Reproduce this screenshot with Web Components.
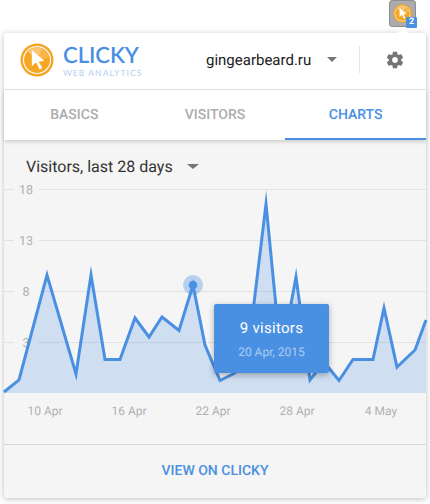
<!doctype html>
<html><head><meta charset="utf-8">
<style>
html,body{margin:0;padding:0;background:#fff;font-family:Roboto,"Liberation Sans",sans-serif;text-rendering:geometricPrecision}
</style></head><body>
<clicky-popup>
  <clicky-toolbar slot="toolbar" count="2"></clicky-toolbar>
  <clicky-header site="gingearbeard.ru"></clicky-header>
  <clicky-tabs active="2"><span>BASICS</span><span>VISITORS</span><span>CHARTS</span></clicky-tabs>
  <clicky-range>Visitors, last 28 days</clicky-range>
  <clicky-chart></clicky-chart>
  <clicky-footer>VIEW ON CLICKY</clicky-footer>
</clicky-popup>
<script>
const LOGO = (s) => `<svg width="${s}" height="${s}" viewBox="0 0 36 36" aria-hidden="true">
  <circle cx="18" cy="18" r="17.5" fill="#f5a623"/>
  <circle cx="18" cy="18" r="14.2" fill="none" stroke="#fff" stroke-width="1.3"/>
  <circle cx="18" cy="18" r="13.4" fill="#f5a623"/>
  <path d="M18 18 L7.5 8.5 A13.4 13.4 0 0 1 24 6 Z" fill="#fbc46e"/>
  <path d="M18 18 L24 6 A13.4 13.4 0 0 1 31 15 Z" fill="#f8b548"/>
  <path d="M12.5 7.5 L12.5 24.5 L17 20.5 L20.8 28 L23.6 26.5 L19.8 19.6 L26 19 Z" fill="#fff"/>
</svg>`;
class Base extends HTMLElement{
  constructor(){super();this.attachShadow({mode:'open'});}
}
customElements.define('clicky-popup',class extends Base{connectedCallback(){this.shadowRoot.innerHTML=`<style>
  :host{display:block;width:430px;height:504px;overflow:hidden;font-family:Roboto,"Liberation Sans",sans-serif}
  .card{margin:0 4px;width:422px;height:465px;background:#f5f5f5;border-radius:2px;box-shadow:0 1px 6px rgba(0,0,0,.26);display:flex;flex-direction:column;position:relative}
</style><slot name="toolbar"></slot><div class="card"><slot></slot></div>`;}});

customElements.define('clicky-toolbar',class extends Base{connectedCallback(){this.shadowRoot.innerHTML=`<style>
  :host{display:flex;justify-content:flex-end;height:33px;padding-right:14px;box-sizing:border-box;position:relative;z-index:2}
  .btn{width:27px;height:27px;box-sizing:border-box;background:#ababab;border:1px solid #8f8f8f;border-radius:3px;display:flex;align-items:center;justify-content:center;position:relative}
  .btn svg{display:block;margin:0 1px 1px 0}
  .badge{position:absolute;right:-2px;bottom:-2px;width:11px;height:11px;background:#4a90e2;color:#fff;font:700 9px/11px Roboto,sans-serif;text-align:center;border-radius:1px}
  .tip{position:absolute;top:27px;right:21px;width:0;height:0;border:6px solid transparent;border-top:0;border-bottom:6px solid #fff}
</style><div class="btn">${LOGO(19)}<span class="badge">${this.getAttribute('count')}</span></div><i class="tip"></i>`;}});

customElements.define('clicky-header',class extends Base{connectedCallback(){this.shadowRoot.innerHTML=`<style>
  :host{display:flex;align-items:center;height:57px;box-sizing:border-box;background:#fff;border-bottom:1px solid #e4e4e4;padding:0 0 3px 16px;border-radius:2px 2px 0 0}
  .logo{width:34px;height:34px;margin-right:9px;flex:none;margin-top:1px}
  .logo svg{display:block}
  .brand{display:flex;flex-direction:column;width:143px;margin-top:1px}
  .name{font:600 22.2px/24px Lato,sans-serif;color:#4a90e2;letter-spacing:-.1px}
  .sub{font:400 8.5px/10px Lato,sans-serif;color:#b4cff0;letter-spacing:1.05px;margin-top:1px}
  .site{font-size:15px;color:#212121;letter-spacing:0;width:121px}
  .caret{width:0;height:0;border:5.5px solid transparent;border-top:5.5px solid #757575;border-bottom:0;flex:none}
  .sep{width:1px;height:27px;background:#e4e4e4;margin-left:22px}
  .gear{margin-left:25px;display:block}
</style><div class="logo">${LOGO(34)}</div><div class="brand"><div class="name">CLICKY</div><div class="sub">WEB ANALYTICS</div></div>
<div class="site">${this.getAttribute('site')}</div><i class="caret"></i><i class="sep"></i>
<svg class="gear" width="20" height="20" viewBox="0 0 24 24"><path fill="#757575" d="M19.43 12.98c.04-.32.07-.64.07-.98s-.03-.66-.07-.98l2.11-1.65c.19-.15.24-.42.12-.64l-2-3.46c-.12-.22-.39-.3-.61-.22l-2.49 1c-.52-.4-1.08-.73-1.69-.98l-.38-2.65C14.46 2.18 14.25 2 14 2h-4c-.25 0-.46.18-.49.42l-.38 2.65c-.61.25-1.17.59-1.69.98l-2.49-1c-.23-.09-.49 0-.61.22l-2 3.46c-.13.22-.07.49.12.64l2.11 1.65c-.04.32-.07.65-.07.98s.03.66.07.98l-2.11 1.65c-.19.15-.24.42-.12.64l2 3.46c.12.22.39.3.61.22l2.49-1c.52.4 1.08.73 1.69.98l.38 2.65c.03.24.24.42.49.42h4c.25 0 .46-.18.49-.42l.38-2.65c.61-.25 1.17-.59 1.69-.98l2.49 1c.23.09.49 0 .61-.22l2-3.46c.12-.22.07-.49-.12-.64l-2.11-1.65zM12 15.5c-1.93 0-3.5-1.57-3.5-3.5s1.57-3.5 3.5-3.5 3.5 1.57 3.5 3.5-1.57 3.5-3.5 3.5z"/></svg>`;}});

customElements.define('clicky-tabs',class extends Base{connectedCallback(){
  const labels=[...this.querySelectorAll('span')].map(s=>s.textContent);
  const active=+this.getAttribute('active');
  this.shadowRoot.innerHTML=`<style>
  :host{display:grid;grid-template-columns:repeat(3,1fr);height:50px;background:#fff;box-shadow:0 2px 4px rgba(0,0,0,.16);position:relative;z-index:1}
  .t{display:flex;align-items:center;justify-content:center;font-weight:500;font-size:14px;color:#adadad;box-sizing:border-box;padding-top:1px;padding-bottom:1px}
  .on{color:#4a90e2;border-bottom:2px solid #4a90e2;padding-bottom:0;padding-top:2px}
</style>${labels.map((l,i)=>`<div class="t${i===active?' on':''}">${l}</div>`).join('')}`;}});

customElements.define('clicky-range',class extends Base{connectedCallback(){this.shadowRoot.innerHTML=`<style>
  :host{display:flex;align-items:center;height:49px;padding:3px 0 0 22px;box-sizing:border-box;color:#333;font-size:16px;}
  i{margin-left:14px;width:0;height:0;border:6px solid transparent;border-top:5px solid #757575;border-bottom:0}
</style><slot></slot><i></i>`;}});

customElements.define('clicky-chart',class extends Base{connectedCallback(){
  const pts=[[0,392],[15,380],[43,275],[72,374],[87,275],[101,359.5],[116,359.5],[131,318],[145,337],[158,317],[175,330.5],[189,285],[201,345],[216,380.5],[231,373],[248,320],[262,204],[277,358],[292,277],[306,380],[320,362],[335,380.5],[349,359.5],[369,359.5],[380,308],[393,367],[411,350],[422,320]];
  const P=pts.map(([x,y])=>`${x},${y-189}`).join(' ');
  const grid=[[0,'18'],[51,'13'],[102,'8'],[153,'3']];
  const xl=[[41,'10 Apr'],[125,'16 Apr'],[209,'22 Apr'],[293,'28 Apr'],[377,'4 May']];
  this.shadowRoot.innerHTML=`<style>
  :host{display:block;height:255px;position:relative}
  svg{display:block;position:absolute;left:0;top:0;overflow:visible}
  text{font-family:Roboto,sans-serif;fill:#b0b0b0}
  .tip{position:absolute;left:210px;top:115px;width:115px;height:69px;background:#4a90e2;border-radius:2px;box-shadow:0 2px 6px rgba(0,0,0,.3);color:#fff;display:flex;flex-direction:column;align-items:center;box-sizing:border-box;padding-top:15px}
  .a{font-size:15px;line-height:18px;letter-spacing:.3px}
  .b{font-size:12px;line-height:14px;margin-top:8px;color:rgba(255,255,255,.55)}
</style>
<svg width="422" height="255" viewBox="0 0 422 255">
  ${grid.map(([y,t])=>`<path d="M0 ${y+.5}H10M35 ${y+.5}H422" stroke="#e2e2e2" stroke-width="1" fill="none"/><text x="22" y="${y+4.5}" text-anchor="middle" font-size="12.5">${t}</text>`).join('')}
  <polygon points="0,204 ${P} 422,204" fill="#4a90e2" fill-opacity=".22"/>
  <polyline points="${P}" fill="none" stroke="#4a90e2" stroke-width="3" stroke-linejoin="miter" stroke-miterlimit="10"/>
  <circle cx="189" cy="96" r="10" fill="#4a90e2" fill-opacity=".36"/>
  <circle cx="189" cy="96" r="4.3" fill="#4a90e2"/>
  ${xl.map(([x,t])=>`<text x="${x}" y="226" text-anchor="middle" font-size="12">${t}</text>`).join('')}
</svg>
<div class="tip"><div class="a">9 visitors</div><div class="b">20 Apr, 2015</div></div>`;}});

customElements.define('clicky-footer',class extends Base{connectedCallback(){this.shadowRoot.innerHTML=`<style>
  :host{display:flex;align-items:center;justify-content:center;height:54px;box-sizing:border-box;border-top:1px solid #d8d8d8;color:#4a90e2;font-weight:500;font-size:14px;padding-bottom:2px}
</style><slot></slot>`;}});
</script>
</body></html>
